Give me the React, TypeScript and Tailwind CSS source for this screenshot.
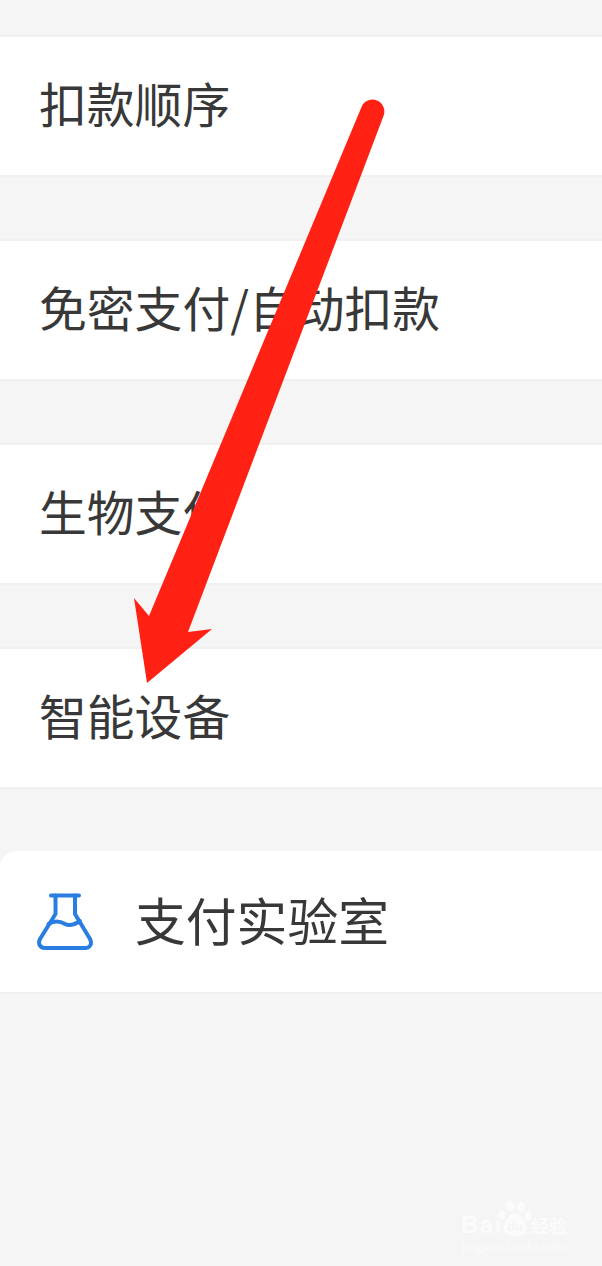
const font = { fontFamily: '"Noto Sans CJK SC", "Noto Sans", sans-serif' };

function Row({ label }: { label: string }) {
  return (
    <div className="flex h-[142px] items-center bg-white border-t-2 border-b-2 border-[#f0f0f0] pl-[39px] pb-[7px]">
      <span className="text-[47.800px] leading-none text-[#383838]">{label}</span>
    </div>
  );
}

function Flask() {
  return (
    <svg width="58" height="60" viewBox="0 0 58 60" fill="none" stroke="#2a7de1" strokeWidth="4" strokeLinecap="round" strokeLinejoin="round">
      <path d="M15 3.500 H43" />
      <path d="M19.500 3.500 V22 L4 47 C1.500 52 4.500 56 9 56 H49 C54 56 56.500 52 54 47 L39 22 V3.500" />
      <path d="M12.500 32 C19 28 24 29 29 32 C33 34 38 33 44 29" />
    </svg>
  );
}

function Arrow() {
  return (
    <svg className="absolute left-0 top-0 pointer-events-none" width="602" height="700" viewBox="0 0 602 700">
      <path d="M361.500 107 A11.800 11.800 0 0 1 383.500 116 L188 632 L212 629 L147 683 L134 598 L149 616 Z" fill="#ff2214" />
    </svg>
  );
}

function Watermark() {
  return (
    <div className="absolute left-[461px] top-[1199px] w-[110px] h-[54px] text-white opacity-60">
      <span className="absolute left-0 top-[12px] text-[24px] leading-[28px] font-bold tracking-[1.500px]" style={{ fontFamily: '"Liberation Sans", sans-serif' }}>Bai</span>
      <svg className="absolute left-[36px] top-[0px]" width="36" height="38" viewBox="0 0 36 38" fill="#ffffff">
        <ellipse cx="5" cy="16" rx="3.500" ry="5" />
        <ellipse cx="13" cy="7" rx="4" ry="5.500" />
        <ellipse cx="24" cy="8" rx="4" ry="5.500" />
        <ellipse cx="31" cy="17" rx="3.500" ry="5" />
        <path d="M18 14 C24 14 32 26 29 33 C26 38 10 38 7 33 C4 26 12 14 18 14 Z" />
        <text x="10" y="32" fontSize="13" fontWeight="700" fill="#f5f5f5" fontFamily="Liberation Sans, sans-serif">du</text>
      </svg>
      <span className="absolute left-[70px] top-[14px] text-[18px] leading-[24px] font-bold whitespace-nowrap">经验</span>
      <span className="absolute left-0 top-[41px] text-[14px] leading-[14px] whitespace-nowrap" style={{ fontFamily: '"Liberation Serif", serif' }}>jingyan.baidu.com</span>
    </div>
  );
}

export default function App() {
  return (
    <div className="relative h-[1266px] w-[602px] overflow-hidden bg-[#f5f5f5] pt-[35px]" style={font}>
      <div className="flex flex-col gap-[62px]">
        <Row label="扣款顺序" />
        <Row label="免密支付/自动扣款" />
        <Row label="生物支付" />
        <Row label="智能设备" />
      </div>
      <div className="mt-[62px] flex h-[143px] items-center rounded-tl-[16px] bg-white border-b-2 border-[#f0f0f0] pl-[36px]">
        <Flask />
        <span className="ml-[41px] mb-[5px] text-[50.800px] leading-none text-[#383838]">支付实验室</span>
      </div>
      <Arrow />
      <Watermark />
    </div>
  );
}
